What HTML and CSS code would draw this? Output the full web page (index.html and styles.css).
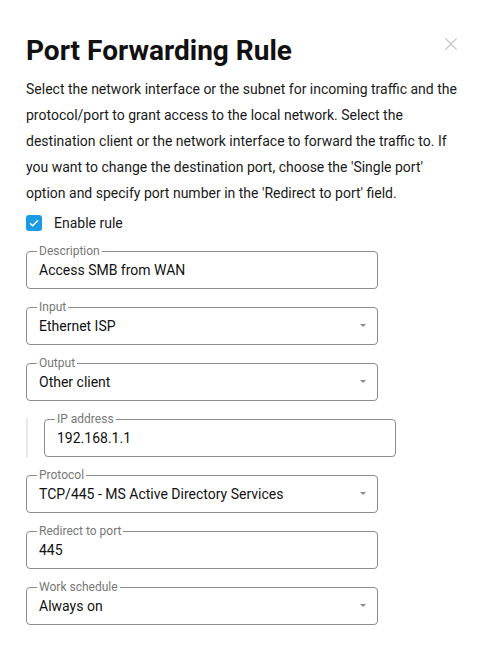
FILE: index.html
```html
<!doctype html>
<html lang="en">
<head>
 <meta charset="UTF-8">
 <title>Port Forwarding Rule</title>
 <link rel="stylesheet" href="styles.css">
</head>
<body>
<div class="modal">
 <div class="head">
  <h1>Port Forwarding Rule</h1>
  <button class="close" type="button" aria-label="Close">
   <svg width="12" height="12" viewBox="0 0 12 12"><path d="M0.5 0.5L11.5 11.5M11.5 0.5L0.5 11.5" stroke="#c8c8c8" stroke-width="1.3" fill="none"/></svg>
  </button>
 </div>
 <p class="intro">Select the network interface or the subnet for incoming traffic and the protocol/port to grant access to the local network. Select the destination client or the network interface to forward the traffic to. If you want to change the destination port, choose the 'Single port' option and specify port number in the 'Redirect to port' field.</p>

 <label class="check">
  <span class="box"><svg width="10" height="8" viewBox="0 0 10 8"><path d="M1 4.2L3.7 6.8L9 1.2" stroke="#fff" stroke-width="1.4" fill="none"/></svg></span>
  Enable rule
 </label>

 <div class="fields">
  <fieldset class="field">
   <legend>Description</legend>
   <div class="value">Access SMB from WAN</div>
  </fieldset>
  <fieldset class="field select">
   <legend>Input</legend>
   <div class="value">Ethernet ISP</div>
  </fieldset>
  <fieldset class="field select">
   <legend>Output</legend>
   <div class="value">Other client</div>
  </fieldset>
  <div class="indent">
   <fieldset class="field">
    <legend>IP address</legend>
    <div class="value">192.168.1.1</div>
   </fieldset>
  </div>
  <fieldset class="field select">
   <legend>Protocol</legend>
   <div class="value">TCP/445 - MS Active Directory Services</div>
  </fieldset>
  <fieldset class="field">
   <legend>Redirect to port</legend>
   <div class="value">445</div>
  </fieldset>
  <fieldset class="field select">
   <legend>Work schedule</legend>
   <div class="value">Always on</div>
  </fieldset>
 </div>
</div>
</body>
</html>
```

FILE: styles.css
```css
*{
 margin:0;
 padding:0;
 box-sizing:border-box;
}
body{
 background:#fff;
 font-family:Roboto, "Liberation Sans", sans-serif;
 color:#1a1a1a;
}
.modal{
 padding:34px 26px 26px;
}
.head{
 display:flex;
 justify-content:space-between;
 align-items:flex-start;
}
h1{
 font-size:28px;
 line-height:34px;
 font-weight:700;
 color:#111;
}
.close{
 border:0;
 background:none;
 margin-top:4px;
 margin-right:2px;
 width:12px;
 height:12px;
 display:flex;
}
.intro{
 margin-top:8px;
 font-size:14px;
 line-height:26px;
 color:#1a1a1a;
}
.check{
 display:flex;
 align-items:center;
 gap:12px;
 margin-top:7px;
 font-size:14px;
 line-height:20px;
}
.box{
 width:16px;
 height:16px;
 border-radius:3px;
 background:#1b9be4;
 display:flex;
 align-items:center;
 justify-content:center;
}
.fields{
 margin-top:11px;
 display:flex;
 flex-direction:column;
 gap:11px;
}
.field{
 width:352px;
 border:1px solid #8c8c8c;
 border-radius:4px;
 padding:0 10px 8px;
}
.field legend{
 font-size:12px;
 line-height:14px;
 color:#777;
 padding:0 2px;
}
.value{
 display:flex;
 justify-content:space-between;
 align-items:center;
 padding:2px 0 0 2px;
 font-size:14px;
 line-height:20px;
 color:#111;
}
.select .value::after{
 content:'';
 margin-top:-1px;
 margin-right:1px;
 border-left:3px solid transparent;
 border-right:3px solid transparent;
 border-top:3px solid #8a8a8a;
}
.indent{
 padding-left:18px;
 background:linear-gradient(#e8e8e8,#e8e8e8) no-repeat 0 6px / 2px calc(100% - 6px);
}
```
